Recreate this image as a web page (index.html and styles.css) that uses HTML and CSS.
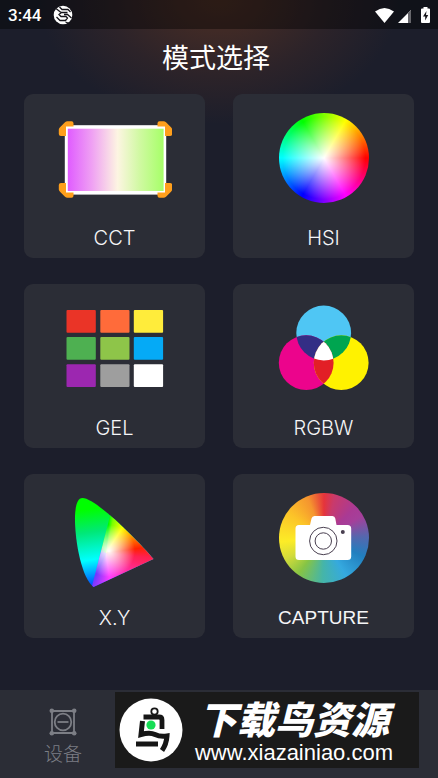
FILE: index.html
```html
<!DOCTYPE html>
<html lang="zh-CN">
<head>
<meta charset="utf-8">
<meta name="viewport" content="width=device-width, initial-scale=1">
<title>模式选择</title>
<link rel="stylesheet" href="styles.css">
</head>
<body>
<div class="status-bar">
  <time class="clock">3:44</time>
  <svg class="status-logo" viewBox="0 0 20 20" aria-hidden="true">
    <circle cx="10" cy="10" r="9.3" fill="#fff"/>
    <g fill="none" stroke="#15141a" stroke-width="1.3">
      <path d="M3 3.500 8 7.500M6.500 2 9 4.500H15L17.500 7M14.500 7.500H8.500L6 9.500 8 11.500H13L14.500 13 12.500 15.500H7L3.500 12M11 9.500H14.500L18.500 13M12.500 17 15 18"/>
    </g>
  </svg>
  <svg class="status-icons" viewBox="0 0 56 18" aria-hidden="true">
    <path d="M0 5.500Q9.500-1.500 19 5.500L9.500 17Z" fill="#fff"/>
    <path d="M23 17 36 4V17Z" fill="#fff"/>
    <path d="M33 7 36 4V17H33Z" fill="#66666b"/>
    <path d="M48.500 1H52.500V2.500H54Q55 2.500 55 3.500V16Q55 17 54 17H47Q46 17 46 16V3.500Q46 2.500 47 2.500H48.500Z" fill="#fff"/>
    <path d="M51.500 5 48 10.500H50.200V14.500L53.200 9H51Z" fill="#15141a"/>
  </svg>
</div>

<main class="content">
  <h1 class="title">模式选择</h1>
  <div class="modes">
    <button class="card" type="button">
      <svg class="icon" viewBox="0 -2 114 100" aria-hidden="true">
        <defs>
          <linearGradient id="cct">
            <stop offset="0" stop-color="#e05cff"/>
            <stop offset=".25" stop-color="#efa0f3"/>
            <stop offset=".52" stop-color="#fdf5e2"/>
            <stop offset=".75" stop-color="#d0f9a2"/>
            <stop offset="1" stop-color="#a6ff68"/>
          </linearGradient>
          <path id="corner" d="M7 12.300Q8 11.300 9.500 11.300H13.500Q15.500 11.300 15.500 13.300V16.500H8V26H3Q.8 26 .8 24V19.500Q.8 18.500 2 17.300Z"/>
        </defs>
        <rect x="6.800" y="15.200" width="101.400" height="69.400" fill="#fff"/>
        <rect x="9.800" y="18.700" width="95.800" height="62.300" fill="url(#cct)"/>
        <g fill="#ff9f1c">
          <use href="#corner"/>
          <use href="#corner" transform="translate(115 0) scale(-1 1)"/>
          <use href="#corner" transform="translate(0 99) scale(1 -1)"/>
          <use href="#corner" transform="translate(115 99) scale(-1 -1)"/>
        </g>
      </svg>
      <span class="label">CCT</span>
    </button>

    <button class="card" type="button">
      <span class="icon wheel-box"><span class="wheel"></span></span>
      <span class="label">HSI</span>
    </button>

    <button class="card" type="button">
      <svg class="icon" viewBox="0 -2 114 100" aria-hidden="true">
        <rect x="8.500" y="10" width="29.300" height="22.700" rx="1" fill="#ea3427"/>
        <rect x="42.300" y="10" width="29.200" height="22.700" rx="1" fill="#ff6b3a"/>
        <rect x="75.800" y="10" width="29.300" height="22.700" rx="1" fill="#ffec3b"/>
        <rect x="8.500" y="37" width="29.300" height="22.700" rx="1" fill="#4eb051"/>
        <rect x="42.300" y="37" width="29.200" height="22.700" rx="1" fill="#8ec549"/>
        <rect x="75.800" y="37" width="29.300" height="22.700" rx="1" fill="#05aaf6"/>
        <rect x="8.500" y="64.200" width="29.300" height="22.700" rx="1" fill="#9c27b0"/>
        <rect x="42.300" y="64.200" width="29.200" height="22.700" rx="1" fill="#9e9e9e"/>
        <rect x="75.800" y="64.200" width="29.300" height="22.700" rx="1" fill="#fff"/>
      </svg>
      <span class="label">GEL</span>
    </button>

    <button class="card" type="button">
      <svg class="icon" viewBox="0 -2 114 100" aria-hidden="true">
        <defs>
          <clipPath id="in-cyan"><circle cx="56.700" cy="33" r="27.400"/></clipPath>
          <clipPath id="in-magenta"><circle cx="39.200" cy="62.700" r="27.400"/></clipPath>
        </defs>
        <circle cx="56.700" cy="33" r="27.400" fill="#4fc6f4"/>
        <circle cx="39.200" cy="62.700" r="27.400" fill="#ec048c"/>
        <circle cx="74.200" cy="62.700" r="27.400" fill="#fff200"/>
        <g clip-path="url(#in-cyan)">
          <circle cx="39.200" cy="62.700" r="27.400" fill="#332e85"/>
          <circle cx="74.200" cy="62.700" r="27.400" fill="#00a550"/>
        </g>
        <g clip-path="url(#in-magenta)">
          <circle cx="74.200" cy="62.700" r="27.400" fill="#e21f26"/>
          <g clip-path="url(#in-cyan)">
            <circle cx="74.200" cy="62.700" r="27.400" fill="#fff"/>
          </g>
        </g>
      </svg>
      <span class="label">RGBW</span>
    </button>

    <button class="card" type="button">
      <span class="icon gamut"><span class="gamut-warm"></span></span>
      <span class="label">X.Y</span>
    </button>

    <button class="card" type="button">
      <span class="icon wheel-box">
        <span class="wheel wheel-capture"></span>
        <svg class="camera" viewBox="28 24 57 45" aria-hidden="true">
          <path d="M32 33H43L44.500 26.500Q45.200 24 47.500 24H65.500Q67.800 24 68.300 26.500L69.500 33H80.500Q84.200 33 84.200 36.500V64.500Q84.200 68 80.500 68H32Q28.500 68 28.500 64.500V36.500Q28.500 33 32 33Z" fill="#fff"/>
          <g fill="none" stroke="#493f50">
            <circle cx="56.300" cy="49" r="13.700"/>
            <circle cx="56.300" cy="49" r="8.200"/>
          </g>
          <circle cx="75.800" cy="40" r="2" fill="#493f50"/>
        </svg>
      </span>
      <span class="label label-wide">CAPTURE</span>
    </button>
  </div>
</main>

<footer class="tab-bar">
  <nav>
    <a class="tab" href="#devices">
      <svg class="tab-icon" viewBox="0 0 28 28" aria-hidden="true">
        <g fill="none" stroke="currentColor" stroke-width="1.800">
          <path d="M3 3H25V25H3Z"/>
          <circle cx="14" cy="14" r="8.300"/>
          <path d="M8.500 14H19.500"/>
        </g>
        <g fill="currentColor">
          <circle cx="2.800" cy="2.800" r="2.300"/>
          <circle cx="25.200" cy="2.800" r="2.300"/>
          <circle cx="2.800" cy="25.200" r="2.300"/>
          <circle cx="25.200" cy="25.200" r="2.300"/>
        </g>
      </svg>
      <span>设备</span>
    </a>
  </nav>
  <aside class="banner">
    <svg class="banner-logo" viewBox="0 0 64 64" aria-hidden="true">
      <circle cx="32" cy="32" r="31.500" fill="#fff"/>
      <g fill="none" stroke="#161616">
        <circle cx="35.500" cy="13.500" r="3.200" stroke-width="1.800"/>
        <path d="M24.500 19H40Q43 19 43 22V31" stroke-width="4.800"/>
        <path d="M23.500 23 22 36.500Q31 34 36 36.500T48 38Q47.500 46 43 52.500" stroke-width="5"/>
        <path d="M17 46H39" stroke-width="5"/>
      </g>
      <circle cx="32" cy="27" r="4.600" fill="#16dd55"/>
    </svg>
    <div class="banner-text">
      <strong>下载鸟资源</strong>
      <span>www.xiazainiao.com</span>
    </div>
  </aside>
</footer>
</body>
</html>
```
FILE: styles.css
```css
* {
  box-sizing: border-box;
}

body {
  display: flex;
  flex-direction: column;
  min-height: 100vh;
  margin: 0;
  color: #fff;
  background:
    radial-gradient(ellipse 180px 124px at 50% 0, #4a2e24 0, #402a26 25%, #2c2329 62%, #1c1e2b00 100%),
    #1c1e2b;
  font-family: Roboto, "Noto Sans CJK SC", sans-serif;
}

.status-bar {
  display: flex;
  align-items: center;
  height: 29px;
  padding: 0 7px 0 8px;
  background: rgba(0, 0, 0, 0.4);
}

.clock {
  font-size: 17px;
  font-weight: 500;
  line-height: 20px;
}

.status-logo {
  width: 20px;
  height: 20px;
  margin-left: 12px;
}

.status-icons {
  width: 56px;
  height: 18px;
  margin-left: auto;
}

.content {
  padding: 8px 24px 24px;
}

.title {
  margin: 0 0 17px;
  padding-right: 6px;
  font-family: "Noto Sans CJK SC", sans-serif;
  font-size: 27px;
  font-weight: 400;
  line-height: 40px;
  text-align: center;
}

.modes {
  display: grid;
  grid-template-columns: 1fr 1fr;
  gap: 26px 28px;
}

.card {
  display: flex;
  flex-direction: column;
  align-items: center;
  gap: 18px;
  padding: 14px 0 8px;
  border: 0;
  border-radius: 9px;
  color: #f5f5f7;
  background: #2b2d36;
  font: inherit;
}

.icon {
  display: block;
  width: 114px;
  height: 100px;
}

.label {
  font-family: Inter, Roboto, sans-serif;
  font-size: 20px;
  font-weight: 300;
  line-height: 24px;
}

.label-wide {
  font-family: "Liberation Sans", sans-serif;
  font-size: 19px;
  font-weight: 400;
}

.wheel-box {
  display: grid;
  place-items: center;
}

.wheel-box > * {
  grid-area: 1 / 1;
}

.wheel {
  width: 90px;
  height: 90px;
  border-radius: 50%;
  background:
    radial-gradient(closest-side, #fff, rgba(255, 255, 255, 0) 92%),
    conic-gradient(#80ff00, #ff0 30deg, #f00 90deg, #f0f 150deg, #00f 210deg, #0ff 270deg, #0f0 330deg, #80ff00);
}

.wheel-capture {
  background: conic-gradient(#e5343b, #c83a6c 15deg, #aa3a94 45deg, #a53f9a 60deg, #5567ae 88deg, #217fbf 115deg, #35a9df 150deg, #45b5a8 182deg, #86c445 215deg, #d5dc3a 242deg, #fcec27 265deg, #fcc428 305deg, #f5952f 338deg, #e5343b);
}

.camera {
  width: 57px;
  height: 45px;
}

.gamut {
  clip-path: path("M25 10C38 10 80 52 96 71L36 99C24 90 17 52 17.500 28C18 17 20 10 25 10Z");
  background: linear-gradient(172deg, #0f0 22%, #00e878 42%, #0ff 66%, #08f 81%, #00f 97%);
}

.gamut-warm {
  display: block;
  height: 100%;
  clip-path: polygon(53px 26px, 114px 0, 114px 100%, 34px 100%);
  background:
    radial-gradient(circle 26px at 51px 63px, #fff 0, rgba(255, 255, 255, 0) 100%),
    conic-gradient(from 0deg at 48px 65px, #0f0 5deg, #7f0 12deg, #ff0 33deg, #f90 56deg, #f20 82deg, #ff2050 96deg, #ff2d98 125deg, #ff3cff 172deg, #7038ff 205deg, #7038ff 270deg, #0f0 340deg);
}

.tab-bar {
  position: relative;
  height: 88px;
  margin-top: auto;
  background: #2b2d36;
}

.tab {
  display: inline-flex;
  flex-direction: column;
  align-items: center;
  gap: 5px;
  padding: 18px 43px 0 44px;
  color: #7c7e85;
  font-size: 19px;
  font-weight: 300;
  line-height: 28px;
  text-decoration: none;
}

.tab-icon {
  width: 28px;
  height: 28px;
}

.banner {
  position: absolute;
  inset: 2px 19px 10px 115px;
  display: flex;
  align-items: center;
  gap: 4px;
  padding-left: 4px;
  background: #1a1a1a;
}

.banner-logo {
  flex: none;
  width: 64px;
  height: 64px;
}

.banner-text {
  display: grid;
  flex: 1;
  justify-items: center;
  padding: 4px 18px 0 0;
  white-space: nowrap;
}

.banner-text strong {
  font-family: "Noto Sans CJK SC", sans-serif;
  font-size: 38px;
  font-style: italic;
  font-weight: 900;
  line-height: 42px;
}

.banner-text span {
  font-family: "Liberation Sans", sans-serif;
  font-size: 22px;
  line-height: 28px;
}
```
